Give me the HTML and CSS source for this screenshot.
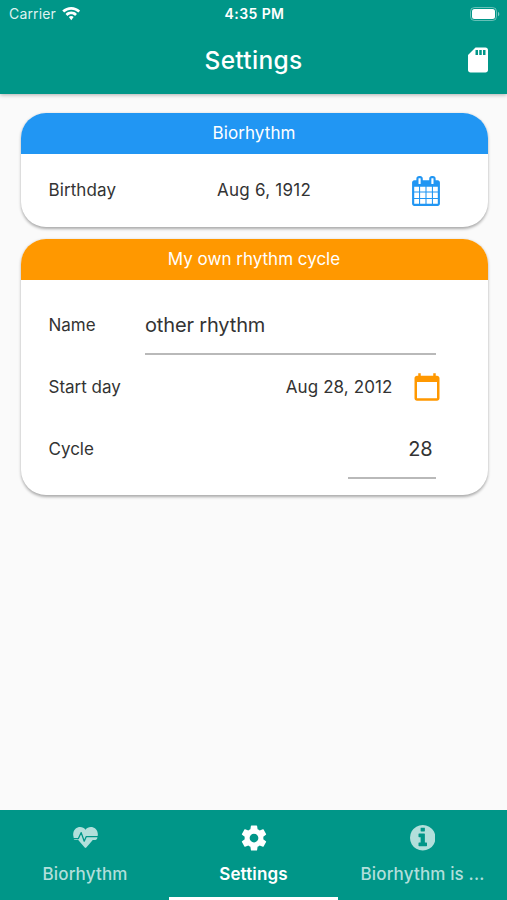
FILE: index.html
```html
<!DOCTYPE html>
<html lang="en">
<head>
<meta charset="utf-8">
<title>Settings</title>
<link rel="stylesheet" href="styles.css">
</head>
<body>
<div class="app">
  <header class="top">
    <div class="status">
      <div class="carrier"><span>Carrier</span>
        <svg class="wifi" viewBox="0 0 18 14"><path d="M9 0C5.6 0 2.500 1.300 0 3.600L1.900 5.600C3.800 3.900 6.300 2.800 9 2.800s5.200 1.100 7.100 2.800L18 3.600C15.500 1.300 12.400 0 9 0zM9 4.600c-2.200 0-4.200.8-5.700 2.300l1.900 2C6.200 7.900 7.500 7.300 9 7.300s2.800.6 3.800 1.600l1.900-2C13.200 5.400 11.200 4.600 9 4.600zM9 9.100c-.9 0-1.800.4-2.400 1L9 13.200l2.400-3.100c-.6-.6-1.500-1-2.400-1z"/></svg>
      </div>
      <div class="clock">4:35 PM</div>
      <svg class="battery" viewBox="0 0 30 14"><rect x=".5" y=".5" width="26" height="13" rx="4" fill="none" stroke="#fff" stroke-opacity=".4"/><rect x="2" y="2" width="23" height="10" rx="2.500"/><path d="M28 4.700c1.800.8 1.800 3.800 0 4.600z" fill-opacity=".5"/></svg>
    </div>
    <div class="bar">
      <h1>Settings</h1>
      <svg class="sd" viewBox="0 0 24 24"><path d="M18 2h-8L4.020 8 4 20c0 1.100.9 2 2 2h12c1.100 0 2-.9 2-2V4c0-1.100-.9-2-2-2zm-6 6h-2V4h2v4zm3 0h-2V4h2v4zm3 0h-2V4h2v4z"/></svg>
    </div>
  </header>
  <main>
    <section class="card">
      <h2 class="blue">Biorhythm</h2>
      <div class="row birthday">
        <span class="label">Birthday</span>
        <span class="date">Aug 6, 1912</span>
        <svg class="cal-grid" viewBox="64 0 1664 1792"><path d="M192 1664h288v-288h-288v288zm352 0h320v-288h-320v288zm-352-352h288v-320h-288v320zm352 0h320v-320h-320v320zm-352-384h288v-288h-288v288zm736 736h320v-288h-320v288zm-384-736h320v-288h-320v288zm768 736h288v-288h-288v288zm-384-352h320v-320h-320v320zm-352-864v-288q0-13-9.500-22.500t-22.500-9.500h-64q-13 0-22.500 9.500t-9.500 22.500v288q0 13 9.500 22.500t22.500 9.500h64q13 0 22.500-9.500t9.500-22.500zm736 864h288v-320h-288v320zm-384-384h320v-288h-320v288zm384 0h288v-288h-288v288zm32-480v-288q0-13-9.500-22.500t-22.500-9.500h-64q-13 0-22.500 9.500t-9.500 22.500v288q0 13 9.500 22.500t22.500 9.500h64q13 0 22.500-9.500t9.500-22.500zm384-64v1280q0 52-38 90t-90 38h-1408q-52 0-90-38t-38-90v-1280q0-52 38-90t90-38h128v-96q0-66 47-113t113-47h64q66 0 113 47t47 113v96h384v-96q0-66 47-113t113-47h64q66 0 113 47t47 113v96h128q52 0 90 38t38 90z"/></svg>
      </div>
    </section>
    <section class="card">
      <h2 class="orange">My own rhythm cycle</h2>
      <div class="form">
        <div class="row">
          <span class="label">Name</span>
          <span class="field name">other rhythm</span>
        </div>
        <div class="row">
          <span class="label">Start day</span>
          <span class="date start">Aug 28, 2012</span>
          <svg class="cal" viewBox="0 0 24 24"><path d="M20 3h-1V1h-2v2H7V1H5v2H4c-1.100 0-2 .9-2 2v16c0 1.100.9 2 2 2h16c1.100 0 2-.9 2-2V5c0-1.100-.9-2-2-2zm0 18H4V8h16v13z"/></svg>
        </div>
        <div class="row">
          <span class="label">Cycle</span>
          <span class="field cycle">28</span>
        </div>
      </div>
    </section>
  </main>
  <nav>
    <div class="tab">
      <svg class="heart" viewBox="0 0 25 21"><path d="M12.500 2.700C10.500-.3 5.500-.9 2.500 1.800 0 4-.5 8.500 1 11h2.500l8.200 9.500q.8.800 1.600 0L21.500 11H24c1.500-2.500 1-7-1.500-9.200-3-2.700-8-2.100-10 .9z"/><path d="M1 10h5l-1.500 3H2.700Q.8 13 .3 11.500z"/><path d="M24 9.800h-6l1.500 3.200h3q1.500-.3 1.900-2z"/><path class="pulse" d="M0 11.600h5.400L8.200 5.600l3 8.600L13.300 9.600H25"/></svg>
      <span class="t1">Biorhythm</span>
    </div>
    <div class="tab active">
      <svg class="gear" viewBox="0 0 24 24"><path d="M19.430 12.980c.04-.32.07-.64.07-.98s-.03-.66-.07-.98l2.110-1.650c.19-.15.24-.42.12-.64l-2-3.460c-.12-.22-.39-.3-.61-.22l-2.490 1c-.52-.4-1.080-.73-1.690-.98l-.38-2.650C14.460 2.180 14.250 2 14 2h-4c-.25 0-.46.18-.49.42l-.38 2.650c-.61.25-1.170.59-1.690.98l-2.490-1c-.23-.09-.49 0-.61.22l-2 3.460c-.13.22-.07.49.12.64l2.110 1.650c-.04.32-.07.65-.07.98s.03.66.07.98l-2.110 1.650c-.19.15-.24.42-.12.64l2 3.460c.12.22.39.3.61.22l2.490-1c.52.4 1.080.73 1.690.98l.38 2.650c.03.24.24.42.49.42h4c.25 0 .46-.18.49-.42l.38-2.650c.61-.25 1.170-.59 1.690-.98l2.490 1c.23.09.49 0 .61-.22l2-3.460c.12-.22.07-.49-.12-.64l-2.110-1.650zM12 15.500c-1.930 0-3.500-1.570-3.500-3.500s1.570-3.500 3.500-3.500 3.500 1.570 3.500 3.500-1.570 3.500-3.500 3.500z"/></svg>
      <span class="t2">Settings</span>
    </div>
    <div class="tab">
      <svg class="info" viewBox="0 128 1536 1536"><path d="M1024 1376v-160q0-14-9-23t-23-9h-96v-512q0-14-9-23t-23-9h-320q-14 0-23 9t-9 23v160q0 14 9 23t23 9h96v320h-96q-14 0-23 9t-9 23v160q0 14 9 23t23 9h448q14 0 23-9t9-23zm-128-896v-160q0-14-9-23t-23-9h-192q-14 0-23 9t-9 23v160q0 14 9 23t23 9h192q14 0 23-9t9-23zm640 416q0 209-103 385.500t-279.500 279.500-385.500 103-385.500-103-279.500-279.500-103-385.500 103-385.500 279.500-279.500 385.500-103 385.500 103 279.500 279.500 103 385.500z"/></svg>
      <span class="t3">Biorhythm is ...</span>
    </div>
  </nav>
</div>
</body>
</html>
```
FILE: styles.css
```css
* { box-sizing: border-box; }
body {
  margin: 0;
  font-family: Inter, "Liberation Sans", sans-serif;
  color: #333;
  background: #fafafa;
}
svg { display: block; flex: none; fill: currentColor; }
h1, h2 { margin: 0; }
.app { display: flex; flex-direction: column; width: 507px; height: 900px; overflow: hidden; }

.top {
  height: 94px;
  background: #009688;
  color: #fff;
  box-shadow: 0 1px 4px rgba(0, 0, 0, .3);
}
.status {
  display: grid;
  grid-template-columns: 1fr auto 1fr;
  align-items: center;
  height: 27px;
  padding: 0 7px 0 9px;
}
.carrier { display: flex; align-items: center; gap: 6px; font-size: 14px; line-height: 18px; letter-spacing: .15px; color: #dff2f0; }
.wifi { width: 18.500px; height: 14px; color: #fff; }
.clock { font-size: 14px; font-weight: 600; line-height: 18px; letter-spacing: .4px; }
.battery { width: 30px; height: 14px; justify-self: end; }
.bar {
  display: grid;
  grid-template-columns: 1fr auto 1fr;
  align-items: center;
  height: 66px;
  padding: 0 14px;
}
h1 { grid-column: 2; font-size: 24.500px; font-weight: 500; line-height: 30px; letter-spacing: .3px; }
.sd { width: 30px; height: 30px; justify-self: end; }

main { flex: 1; padding: 19px 19.500px 0 20.500px; }
.card {
  margin-bottom: 12px;
  border-radius: 25px;
  overflow: hidden;
  background: #fff;
  box-shadow: 0 1.500px 3px rgba(0, 0, 0, .32);
}
h2 {
  height: 40.500px;
  color: #fff;
  font-size: 17px;
  font-weight: 400;
  line-height: 41px;
  text-align: center;
}
.blue { background: #2196f3; letter-spacing: .1px; }
.orange { background: #ff9800; }
.row { display: flex; align-items: center; padding-left: 28px; }
.label, .date { font-size: 17px; line-height: 24px; letter-spacing: .1px; }
.birthday { height: 73.500px; justify-content: space-between; padding-right: 47.500px; }
.birthday .date { letter-spacing: .25px; }
.cal-grid { width: 28px; height: 30px; margin-top: 1px; color: #2196f3; }
.form { height: 215px; padding-top: 14.500px; }
.form .row { height: 62px; padding-right: 51.500px; }
.form .label { width: 96.500px; letter-spacing: 0; }
.field { height: 60px; font-size: 20px; line-height: 60px; border-bottom: 2px solid #b9b9b9; }
.name { flex: 1; letter-spacing: -.15px; }
.cycle { width: 88px; margin-left: auto; padding-right: 3.500px; text-align: right; letter-spacing: -.2px; }
.form .start { margin-left: auto; margin-right: 19px; }
.cal { width: 30px; height: 30px; margin-right: -5.500px; color: #ff9800; }

nav { display: grid; grid-template-columns: repeat(3, 1fr); height: 90px; background: #009688; color: #b2dfdb; }
.tab {
  display: flex;
  flex-direction: column;
  align-items: center;
  justify-content: space-between;
  padding: 12.500px 0 11px;
  border-bottom: 3px solid transparent;
  font-size: 17px;
  font-weight: 500;
  line-height: 24px;
  letter-spacing: .15px;
}
.active { color: #fff; border-color: #fff; }
.t1 { padding-left: 1px; }
.t2 { font-weight: 600; }
.gear { width: 30px; height: 30px; }
.heart { width: 25px; height: 21px; margin: 4.500px 0 0 1px; }
.pulse { fill: none; stroke: #009688; stroke-width: 1.300px; stroke-linejoin: round; }
.info { width: 25.500px; height: 25.500px; margin-top: 2.500px; }
```
